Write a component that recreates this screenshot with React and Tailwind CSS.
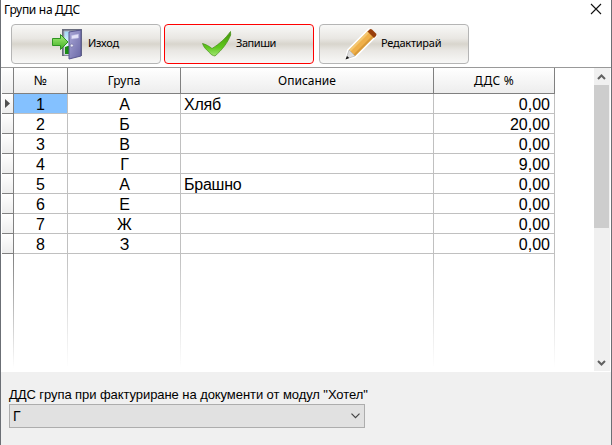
import React from 'react';

const rows = [
  ['1', 'А', 'Хляб', '0,00'],
  ['2', 'Б', '', '20,00'],
  ['3', 'В', '', '0,00'],
  ['4', 'Г', '', '9,00'],
  ['5', 'А', 'Брашно', '0,00'],
  ['6', 'Е', '', '0,00'],
  ['7', 'Ж', '', '0,00'],
  ['8', 'З', '', '0,00'],
];

const grid = 'grid grid-cols-[12px_54px_113px_253px_121px]';

function DoorIcon() {
  return (
    <svg width="32" height="32" viewBox="0 0 32 32" className="shrink-0">
      <defs>
        <linearGradient id="door" x1="0" y1="0" x2="1" y2="1">
          <stop offset="0" stopColor="#a9a6d6" />
          <stop offset="1" stopColor="#6a68a6" />
        </linearGradient>
        <linearGradient id="arrow" x1="0" y1="0" x2="0" y2="1">
          <stop offset="0" stopColor="#a8f07c" />
          <stop offset="1" stopColor="#3fae22" />
        </linearGradient>
        <linearGradient id="sky" x1="0" y1="0" x2="0" y2="1">
          <stop offset="0" stopColor="#9fd8f6" />
          <stop offset="0.65" stopColor="#f0fbff" />
        </linearGradient>
      </defs>
      <path d="M11 1h20v27H11z" fill="#696d7e" />
      <path d="M13 3h12v24H13z" fill="url(#sky)" stroke="#a9adba" />
      <path d="M14 19q4-2 8-1v8h-8z" fill="#198c12" />
      <path d="M18 4 30 2v26l-12 3z" fill="url(#door)" stroke="#59578f" />
      <path d="m20.500 7.500 7-1.500v4l-7 1z" fill="#e3e2f8" stroke="#b5b3de" strokeWidth=".5" />
      <circle cx="20.800" cy="17.500" r="1.500" fill="#eeeefa" stroke="#6d6b9b" strokeWidth=".6" />
      <path d="M1.500 10.500h8V6.500L17 14l-7.500 7.500v-4h-8z" fill="url(#arrow)" stroke="#2f9423" />
    </svg>
  );
}

function CheckIcon() {
  return (
    <svg width="32" height="32" viewBox="0 0 32 32" className="shrink-0">
      <defs>
        <linearGradient id="check" x1="0" y1="0" x2="0" y2="1">
          <stop offset="0" stopColor="#45940c" />
          <stop offset=".65" stopColor="#5fc81c" />
          <stop offset="1" stopColor="#a3e574" />
        </linearGradient>
      </defs>
      <path d="M1.500 15.500c3.500 1 6.500 2.500 9.500 5C18 16.500 25 10 29.500 3.500l.2 3.500C26.500 15 21 22 14 28c-2-.3-4.500-1.500-5.500-3.500C5.500 22 2.500 19 1.500 15.500z" fill="url(#check)" stroke="#438f13" strokeWidth=".7" />
    </svg>
  );
}

function PencilIcon() {
  return (
    <svg width="34" height="34" viewBox="0 0 34 34" className="shrink-0">
      <path d="M2 32 4 23 25 2 32 9 11 30z" fill="#fff" stroke="#fff" strokeWidth="2" strokeLinejoin="round" />
      <path d="m5 23 19-19 6 6-19 19z" fill="#efb04a" />
      <path d="m5 23 19-19 1.500 1.500L6.500 24.500z" fill="#f4c873" />
      <path d="m9.500 27.500 19-19 1.500 1.500-19 19z" fill="#d99a38" />
      <path d="m23.500 4.500 2-2q1-1 2.500 0l4 4q1 1 0 2.500l-2 2z" fill="#983f0b" />
      <path d="m5 23 6 6-9 3z" fill="#dedede" stroke="#a0a0a0" strokeWidth=".5" />
      <path d="m3 29 2.200 2-3.700 1.500z" fill="#111" />
    </svg>
  );
}

function Button({ className, children }) {
  return (
    <button
      className={
        'flex h-10 w-[150px] items-center rounded-[4px] border bg-[linear-gradient(#f8f8f7_0%,#e9e7e3_35%,#d8d5cd_50%,#e9e7e3_67%,#f8f8f7_100%)] text-[11px] ' +
        className
      }
    >
      {children}
    </button>
  );
}

function Header({ children }) {
  return (
    <div className="flex items-center justify-center border-r border-b border-[#808080] bg-linear-to-b from-white to-[#ededed]">
      {children}
    </div>
  );
}

function Fade({ className = 'from-[#c0c0c0]' }) {
  return (
    <div className="flex justify-end">
      <div className={'w-px bg-linear-to-b to-white ' + className} />
    </div>
  );
}

export default function App() {
  return (
    <div className="flex h-[445px] w-[612px] flex-col overflow-hidden border-x border-[#6b6f75] bg-white font-['Noto_Sans','Open_Sans',sans-serif] text-black">
      <div className="flex h-6 shrink-0 justify-between">
        <div className="pt-px pl-[3px] text-[12px] leading-[17px] tracking-[-0.3px]">Групи на ДДС</div>
        <svg width="12" height="12" viewBox="0 0 12 12" className="mt-[3px] mr-[9px]">
          <path d="m1 1 10 10M11 1 1 11" stroke="#111" strokeWidth="1.100" />
        </svg>
      </div>

      <div className="flex h-[43px] shrink-0 items-start pl-[10px]">
        <Button className="border-[#b5b5b5] pl-[39px]">
          <DoorIcon />
          <span className="mb-[2px] ml-[5px] tracking-[-0.2px]">Изход</span>
        </Button>
        <Button className="ml-[3px] border-[#ff0000] pl-[36px]">
          <CheckIcon />
          <span className="mb-[2px] ml-[3px] tracking-[-0.45px]">Запиши</span>
        </Button>
        <Button className="ml-[5px] border-[#b5b5b5] pl-[24px]">
          <PencilIcon />
          <span className="mb-[2px] ml-[3px] tracking-[-0.25px]">Редактирай</span>
        </Button>
      </div>

      <div className="flex h-[305px] shrink-0 border-t border-[#999]">
        <div className="flex w-[592px] flex-col pl-px">
          <div className={grid + ' h-[26px] shrink-0 text-[12px]'}>
            <Header />
            <Header>
              <span className="text-[13px]">№</span>
            </Header>
            <Header>Група</Header>
            <Header>Описание</Header>
            <Header>
              <span className="tracking-[0.3px]">ДДС %</span>
            </Header>
          </div>
          <div className="font-['Liberation_Sans',Arial,sans-serif] text-[16px] leading-[21px]">
            {rows.map(([n, group, text, vat], i) => (
              <div key={n} className={grid + ' h-5 grid-rows-[20px]'}>
                <div className="flex items-center border-r border-b border-[#808080] bg-linear-to-b from-white to-[#ededed] pl-[3px]">
                  {i === 0 && (
                    <svg width="5" height="9" viewBox="0 0 5 9">
                      <path d="M0 0 5 4.500 0 9z" fill="#505050" />
                    </svg>
                  )}
                </div>
                <div className={'border-r border-b border-[#c0c0c0] text-center ' + (i === 0 ? 'bg-[#84c1ff]' : '')}>{n}</div>
                <div className="border-r border-b border-[#c0c0c0] pl-px text-center">{group}</div>
                <div className="border-r border-b border-[#c0c0c0] pl-[3px] tracking-[-0.25px]">{text}</div>
                <div className="border-r border-b border-[#c0c0c0] pr-[4px] text-right">{vat}</div>
              </div>
            ))}
          </div>
          <div className={grid + ' h-[114px]'}>
            <Fade className="from-[#808080]" />
            <Fade />
            <Fade />
            <Fade />
            <Fade />
          </div>
        </div>
        <div className="mb-px ml-px flex w-4 flex-col bg-[#f0f0f0]">
          <svg width="15" height="17" viewBox="0 0 15 17" className="shrink-0">
            <path d="m4 11 3.500-3.500L11 11" fill="none" stroke="#606060" strokeWidth="2" />
          </svg>
          <div className="h-[143px] w-[15px] bg-[#cdcdcd]" />
          <svg width="15" height="17" viewBox="0 0 15 17" className="mt-auto shrink-0">
            <path d="m4 7 3.500 3.500L11 7" fill="none" stroke="#606060" strokeWidth="2" />
          </svg>
        </div>
      </div>

      <div className="flex-1 bg-[#f0f0f0] pt-[13px] pl-[8px] font-['Liberation_Sans',Arial,sans-serif]">
        <div className="h-[19px] text-[13px] leading-[19px] tracking-[-0.07px] whitespace-nowrap">
          ДДС група при фактуриране на документи от модул "Хотел"
        </div>
        <div className="flex h-6 w-[356px] items-center justify-between border border-[#adadad] bg-[#e1e1e1] pr-[4px] pl-[3px] text-[14px]">
          <span>Г</span>
          <svg width="9" height="6" viewBox="0 0 9 6">
            <path d="m.5.700 4 4 4-4" fill="none" stroke="#444" strokeWidth="1.200" />
          </svg>
        </div>
      </div>
    </div>
  );
}
